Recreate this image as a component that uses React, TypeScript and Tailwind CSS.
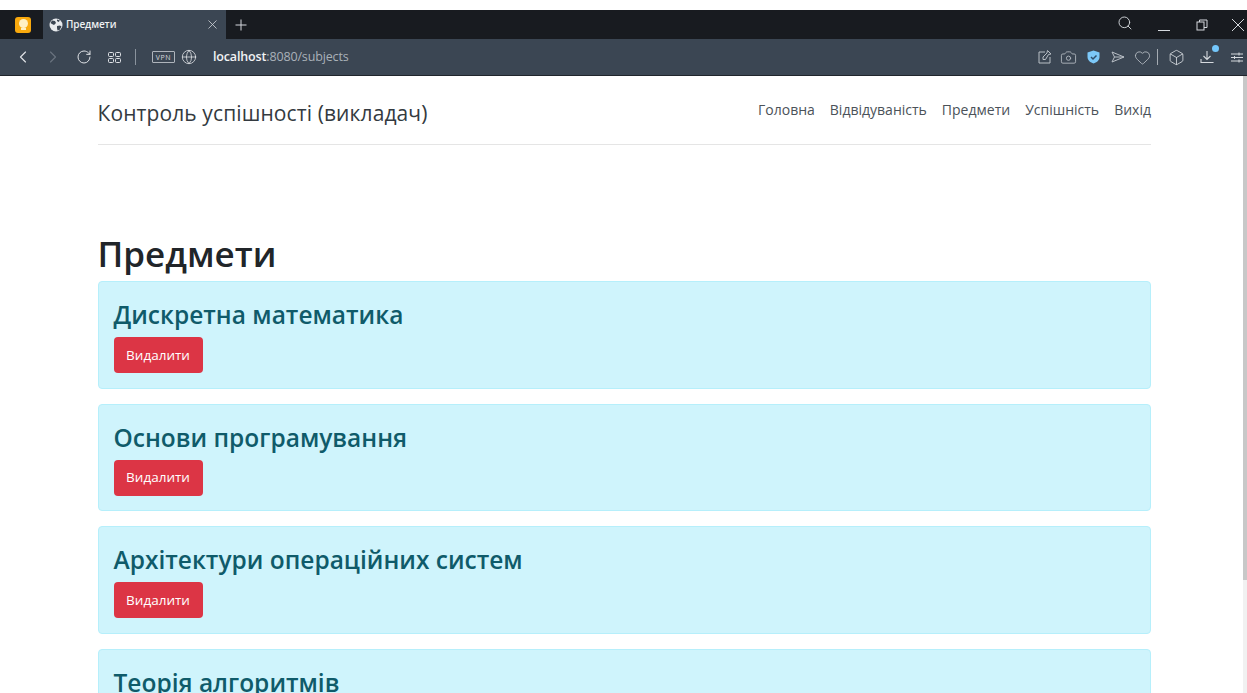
import { Box, Camera, ChevronLeft, ChevronRight, Globe, Heart, RotateCw, Search, X } from 'lucide-react';

const navLinks = ['Головна', 'Відвідуваність', 'Предмети', 'Успішність', 'Вихід'];
const subjects = ['Дискретна математика', 'Основи програмування', 'Архітектури операційних систем', 'Теорія алгоритмів'];

const BrowserBar = () => (
    <div className="shrink-0 font-['Open_Sans',sans-serif]">
        {/* Tab strip */}
        <div className="h-[29px] bg-[#181b20] flex items-center text-[#d5d9de]">
            <div className="w-[43px] h-full flex items-center pl-[15px]">
                <div className="w-[16px] h-[16px] rounded-[3px] bg-[#f9a90d] flex flex-col items-center justify-center">
                    <div className="w-[9px] h-[9px] rounded-full bg-[#fff0c4]" />
                    <div className="w-[5px] h-[2px] mt-[0.5px] bg-[#fff0c4]" />
                </div>
            </div>
            <div className="w-[183px] h-full bg-[#3b4653] flex items-center pl-[6px] pr-[6px]">
                <svg width="14" height="14" viewBox="0 0 14 14" className="shrink-0">
                    <circle cx="7" cy="7" r="6.5" fill="#e8ebee" />
                    <path d="M3 2.5l3 .5 1 2-2 2-2-1-1.500-1zM8 8l3-.5 1.500 1-2 3.500-2 .5-.5-2.500zM8 1.500l3 1-1.500 1.500-1.500-1z" fill="#3b4653" />
                </svg>
                <span className="ml-[3px] text-[10px] font-semibold tracking-[-0.1px] text-[#eef0f2] flex-1">Предмети</span>
                <X size={15} strokeWidth={1.3} className="text-[#d0d4d9]" />
            </div>
            <svg width="12" height="12" viewBox="0 0 12 12" className="ml-[9px]">
                <path d="M6 .5v11M.5 6h11" stroke="#d5d9de" strokeWidth="1" />
            </svg>
            <div className="flex-1" />
            <Search size={16} strokeWidth={1.4} className="mr-[25px] mt-[-4px] text-[#d5d9de]" />
            <svg width="12" height="12" viewBox="0 0 12 12" className="mr-[26px]">
                <path d="M0 11.5h12" stroke="#d5d9de" strokeWidth="1" />
            </svg>
            <svg width="12" height="12" viewBox="0 0 12 12" className="mr-[23px]">
                <rect x="1" y="3" width="7" height="8" fill="none" stroke="#d5d9de" />
                <path d="M3.5 3V1H11v7.500H8" fill="none" stroke="#d5d9de" />
            </svg>
            <svg width="14" height="14" viewBox="0 0 14 14" className="mr-[2px]">
                <path d="M1 1l12 12M13 1L1 13" stroke="#d5d9de" strokeWidth="1" />
            </svg>
        </div>
        {/* Address bar */}
        <div className="h-[37px] bg-[#3b4653] border-b border-[#20252c] flex items-center text-[#dfe2e6]">
            <ChevronLeft size={20} strokeWidth={1.4} className="ml-[13px]" />
            <ChevronRight size={20} strokeWidth={1.4} className="ml-[10px] text-[#69737f]" />
            <RotateCw size={16} strokeWidth={1.5} className="ml-[13px]" />
            <svg width="13" height="11" viewBox="0 0 13 11" className="ml-[16px]">
                <rect x=".5" y=".5" width="5" height="4" rx="1" fill="none" stroke="#dfe2e6" />
                <rect x="7.5" y=".5" width="5" height="4" rx="1" fill="none" stroke="#dfe2e6" />
                <rect x=".5" y="6.5" width="5" height="4" rx="1" fill="none" stroke="#dfe2e6" />
                <rect x="7.5" y="6.5" width="5" height="4" rx="1" fill="none" stroke="#dfe2e6" />
            </svg>
            <div className="ml-[14px] w-px h-[16px] bg-[#8a939d]" />
            <div className="ml-[16px] w-[23px] h-[12px] border border-[#aeb4bb] rounded-[1px] flex items-center justify-center text-[7px] tracking-[0.6px] leading-none text-[#d5d8dc]">
                VPN
            </div>
            <Globe size={16} strokeWidth={1.2} className="ml-[6px]" />
            <div className="ml-[16px] text-[12.500px] tracking-[-0.15px]">
                <span className="text-[#f1f3f5] font-semibold">localhost</span>
                <span className="text-[#aab1b9]">:8080/subjects</span>
            </div>
            <div className="flex-1" />
            <svg width="14" height="14" viewBox="0 0 14 14">
                <path d="M7 2H1v11h11V7" fill="none" stroke="#b9bfc6" />
                <path d="M5 9.500V7l4-4 .5-2.500L13 4l-2.500.5-3 5z" fill="none" stroke="#b9bfc6" />
            </svg>
            <Camera size={17} strokeWidth={1.2} className="ml-[8px] text-[#b9bfc6]" />
            <svg width="13" height="14" viewBox="0 0 13 14" className="ml-[10px]">
                <path d="M6.500 .5L12.500 2.500V7c0 3.500-3 5.500-6 6.500C3.500 12.500.5 10.500.5 7V2.500z" fill="#7cc8f8" />
                <path d="M4 7l2 2 3.500-3.500" fill="none" stroke="#2f4f6b" strokeWidth="1.500" />
            </svg>
            <svg width="14" height="12" viewBox="0 0 14 12" className="ml-[11px]">
                <path d="M1 1l12 5-12 5 2.500-5zM3.500 6H13" fill="none" stroke="#b9bfc6" />
            </svg>
            <Heart size={17} strokeWidth={1.2} className="ml-[9px] text-[#b9bfc6]" />
            <div className="ml-[6px] w-px h-[16px] bg-[#a5abb2]" />
            <Box size={17} strokeWidth={1.2} className="ml-[10px] text-[#d5d9de]" />
            <div className="relative ml-[15px] w-[14px] h-[14px]">
                <svg width="14" height="14" viewBox="0 0 14 14">
                    <path d="M7 1v8M3.500 6L7 9.500 10.500 6M1 9v3.500h12V12" fill="none" stroke="#d5d9de" strokeWidth="1.100" />
                </svg>
                <div className="absolute -top-[5px] -right-[5px] w-[7px] h-[7px] rounded-full bg-[#74c7fb]" />
            </div>
            <svg width="12" height="11" viewBox="0 0 12 11" className="ml-[17px] mr-[4px]">
                <path d="M0 2h12M0 5.500h12M0 9h12" stroke="#d5d9de" />
                <path d="M8 .5v3M3.500 4v3M8 7.500v3" stroke="#d5d9de" />
            </svg>
        </div>
    </div>
);

const App = () => {
    return (
        <div className="h-[693px] flex flex-col overflow-hidden bg-white font-['Open_Sans',sans-serif] text-[#212529]">
            <div className="h-[10px] shrink-0 bg-white" />
            <BrowserBar />
            <div className="flex-1 min-h-0 flex">
                <main className="flex-1 min-w-0 overflow-hidden pl-[97.500px] pr-[92px]">
                    <header className="h-[69px] border-b border-[#e5e5e5] flex items-center justify-between">
                        <a className="pt-[8px] text-[21px] tracking-[0.1px] text-[#343a40]">Контроль успішності (викладач)</a>
                        <nav className="flex gap-[15px] mt-[-2px]">
                            {navLinks.map((link) => (
                                <a key={link} className="text-[14px] text-[#4b5259]">
                                    {link}
                                </a>
                            ))}
                        </nav>
                    </header>
                    <h1 className="mt-[85px] text-[35px] leading-[48px] font-semibold">Предмети</h1>
                    <div className="mt-[3px] flex flex-col gap-[15px]">
                        {subjects.map((name) => (
                            <div key={name} className="h-[107.500px] shrink-0 bg-[#cff4fc] border border-[#b6effb] rounded-[4px] px-[15px] pt-[15px]">
                                <h4 className="text-[24.500px] leading-[36px] font-semibold text-[#0f5b6a]">{name}</h4>
                                <button className="block mt-[4px] h-[36px] w-[89px] bg-[#dc3545] rounded-[4px] text-[13.500px] text-white">
                                    Видалити
                                </button>
                            </div>
                        ))}
                    </div>
                </main>
                {/* Page scrollbar */}
                <div className="w-[4px] shrink-0 bg-[#f1f1f1]">
                    <div className="h-[504px] bg-[#c8c8c8]" />
                </div>
            </div>
        </div>
    );
};

export default App;
